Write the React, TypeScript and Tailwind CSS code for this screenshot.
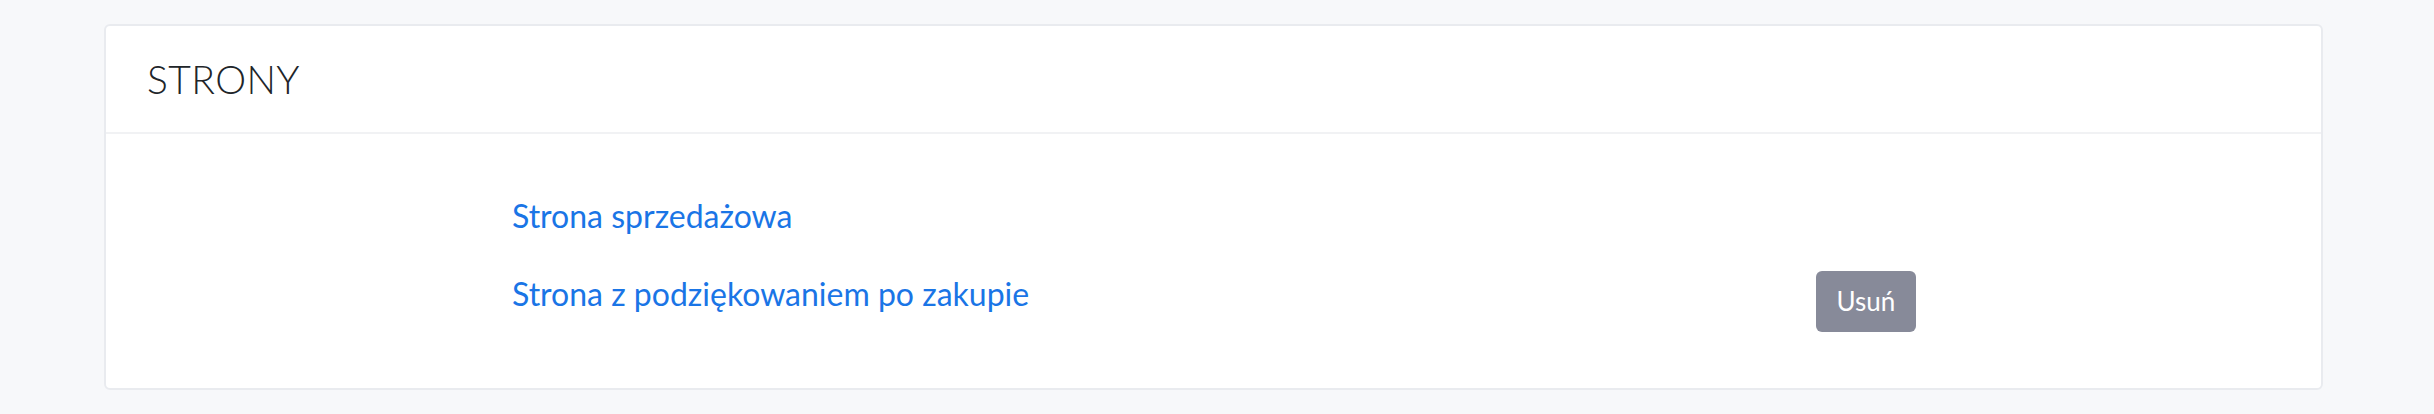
import React from 'react';

const pages = [
	{ id: 1, name: 'Strona sprzedażowa', removable: false },
	{ id: 2, name: 'Strona z podziękowaniem po zakupie', removable: true },
];

export default function App() {
	return (
		<div className="min-h-[414px] bg-[#f7f8fa] pt-[24px] pl-[104px] pr-[111px] font-['Lato','Liberation_Sans',sans-serif]">
			<div className="rounded-[6px] border-2 border-[#e9ebef] bg-white">
				<div className="flex h-[108px] items-center border-b-2 border-[#f1f2f4] px-[41px]">
					<h2 className="text-[39px] leading-none font-light tracking-[0.4px] text-[#212529]">STRONY</h2>
				</div>

				<div className="flex flex-col gap-[30px] pt-[58px] pb-[56px] pl-[406px]">
					{pages.map((page) => (
						<div key={page.id} className="grid grid-cols-[1304px_auto] items-start">
							<a href="#" className="text-[32px] leading-[48px] text-[#1a75e6]">
								{page.name}
							</a>
							{page.removable && (
								<button className="mt-[1px] flex h-[61px] w-[100px] items-center justify-center rounded-[6px] bg-[#878a99] text-[26px] text-white">
									Usuń
								</button>
							)}
						</div>
					))}
				</div>
			</div>
		</div>
	);
}
